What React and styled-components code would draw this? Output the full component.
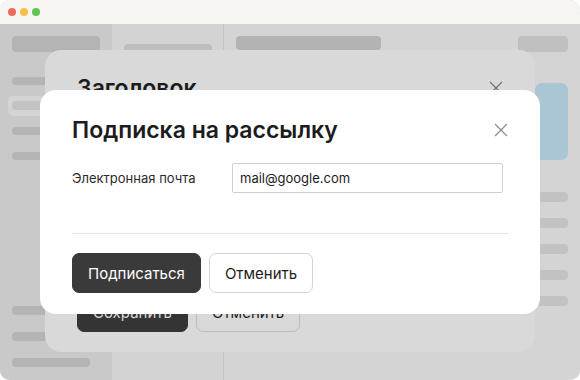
import React from 'react';
import styled, { createGlobalStyle } from 'styled-components';

const GlobalStyle = createGlobalStyle`
  html, body {
    margin: 0;
    padding: 0;
    background: #ffffff;
  }
  body {
    font-family: Inter, "Noto Sans", "Liberation Sans", sans-serif;
    -webkit-font-smoothing: antialiased;
  }
  * {
    box-sizing: border-box;
  }
`;

const Window = styled.div`
  width: 580px;
  height: 380px;
  border-radius: 10px;
  overflow: hidden;
  display: flex;
  flex-direction: column;
  background: #d4d4d4;
`;

const TitleBar = styled.div`
  height: 24px;
  flex-shrink: 0;
  display: flex;
  align-items: center;
  gap: 4px;
  padding-left: 8px;
  background: #f7f5f1;
`;

const Light = styled.span`
  width: 8px;
  height: 8px;
  border-radius: 50%;
  background: ${p => p.color};
`;

const Body = styled.div`
  position: relative;
  flex: 1;
  display: grid;
  grid-template-columns: 112px 111px 1px 1fr;
`;

const Sidebar = styled.div`
  display: flex;
  flex-direction: column;
  padding: 12px 12px 13px 12px;
  background: #c9c9c9;
`;

const Bar = styled.div`
  width: ${p => p.w}px;
  height: ${p => p.h || 8}px;
  border-radius: 4px;
  background: ${p => p.bg || '#b4b4b4'};
  flex-shrink: 0;
`;

const NavList = styled.div`
  display: flex;
  flex-direction: column;
  gap: 17px;
  margin-top: 25px;
`;

const NavSelected = styled.div`
  margin: -6px -4px -6px -4px;
  padding: 5px 4px 6px 4px;
  border-radius: 5px;
  background: #d4d4d4;
`;

const NavBottom = styled.div`
  margin-top: auto;
  display: flex;
  flex-direction: column;
  gap: 17px;
`;

const ListColumn = styled.div`
  padding: 20px 11px 0 12px;
  background: #d3d3d3;
`;

const Divider = styled.div`
  background: #c4c4c4;
`;

const Main = styled.div`
  display: flex;
  flex-direction: column;
  padding: 12px 12px 0 12px;
  background: #d4d4d4;
`;

const TopRow = styled.div`
  display: flex;
  justify-content: space-between;
  align-items: flex-start;
`;

const Aside = styled.div`
  display: flex;
  flex-direction: column;
  align-items: flex-end;
  margin-top: 31px;
`;

const BlueCard = styled.div`
  width: 33px;
  height: 77px;
  border-radius: 7px;
  background: #aac6d5;
`;

const AsideBars = styled.div`
  display: flex;
  flex-direction: column;
  gap: 16px;
  margin-top: 32px;
`;

const Overlay = styled.div`
  position: absolute;
  inset: 0;
`;

const Dialog = styled.div`
  position: absolute;
  left: ${p => p.x}px;
  top: ${p => p.y}px;
  width: ${p => p.w}px;
  height: ${p => p.h}px;
  display: flex;
  flex-direction: column;
  padding: ${p => p.pt}px 32px 20px 32px;
  border-radius: 16px;
  background: ${p => (p.back ? '#d9d9d9' : '#ffffff')};
`;

const Header = styled.div`
  display: flex;
  justify-content: space-between;
  align-items: center;
  height: 28px;
`;

const Title = styled.h2`
  margin: 0;
  font-size: 23px;
  line-height: 28px;
  font-weight: 600;
  color: #1c1c1c;
`;

const CloseButton = styled.button`
  display: flex;
  align-items: center;
  justify-content: center;
  width: 14px;
  height: 14px;
  padding: 0;
  border: none;
  background: none;
  color: ${p => (p.back ? '#6f6f6f' : '#8c8c8c')};
`;

const FormRow = styled.div`
  display: flex;
  align-items: center;
  margin-top: 19px;
`;

const Label = styled.label`
  width: 160px;
  font-size: 13px;
  color: #2b2b2b;
`;

const Input = styled.input`
  width: 271px;
  height: 30px;
  padding: 0 7px;
  border: 1px solid #cfcfcf;
  border-radius: 2px;
  font-family: inherit;
  font-size: 13px;
  color: #1c1c1c;
  outline: none;
`;

const Rule = styled.hr`
  margin: 40px 0 0 0;
  border: none;
  border-top: 1px solid #e4e4e4;
`;

const Spacer = styled.div`
  flex: 1;
`;

const Footer = styled.div`
  display: flex;
  gap: 8px;
  margin-top: ${p => p.mt || 0}px;
`;

const Button = styled.button`
  height: 40px;
  padding: 0 15px;
  border-radius: 7px;
  font-family: inherit;
  font-size: 15px;
  border: 1px solid ${p => (p.primary ? p.dark : p.line)};
  background: ${p => (p.primary ? p.dark : p.fill)};
  color: ${p => (p.primary ? p.ink : '#1c1c1c')};
`;

const CloseIcon = () => (
  <svg width="14" height="14" viewBox="0 0 14 14" fill="none">
    <path d="M1 1L13 13M13 1L1 13" stroke="currentColor" strokeWidth="1.2" />
  </svg>
);

const App = () => {
  return (
    <>
      <GlobalStyle />
      <Window>
        <TitleBar>
          <Light color="#ec6a5e" />
          <Light color="#f4bf4f" />
          <Light color="#61c554" />
        </TitleBar>
        <Body>
          <Sidebar>
            <Bar w={88} h={16} />
            <NavList>
              <Bar w={80} />
              <NavSelected>
                <Bar w={80} h={9} bg="#c3c3c3" />
              </NavSelected>
              <Bar w={80} />
              <Bar w={80} />
            </NavList>
            <NavBottom>
              <Bar w={80} h={9} />
              <Bar w={80} h={9} />
              <Bar w={78} h={9} />
            </NavBottom>
          </Sidebar>
          <ListColumn>
            <Bar w={88} h={12} bg="#bdbdbd" />
          </ListColumn>
          <Divider />
          <Main>
            <TopRow>
              <Bar w={145} h={14} bg="#b3b3b3" />
              <Bar w={50} h={16} bg="#c0c0c0" />
            </TopRow>
            <Aside>
              <BlueCard />
              <AsideBars>
                <Bar w={50} h={10} bg="#c2c2c2" />
                <Bar w={50} h={10} bg="#c2c2c2" />
                <Bar w={50} h={10} bg="#c2c2c2" />
                <Bar w={50} h={10} bg="#c2c2c2" />
                <Bar w={50} h={10} bg="#c2c2c2" />
              </AsideBars>
            </Aside>
          </Main>

          <Overlay>
            <Dialog back x={45} y={26} w={490} h={302} pt={24}>
              <Header>
                <Title>Заголовок</Title>
                <CloseButton back>
                  <CloseIcon />
                </CloseButton>
              </Header>
              <Spacer />
              <Footer>
                <Button primary dark="#343434" ink="#d9d9d9">Сохранить</Button>
                <Button fill="#d9d9d9" line="#bcbcbc">Отменить</Button>
              </Footer>
            </Dialog>

            <Dialog x={40} y={66} w={500} h={224} pt={26}>
              <Header>
                <Title>Подписка на рассылку</Title>
                <CloseButton>
                  <CloseIcon />
                </CloseButton>
              </Header>
              <FormRow>
                <Label>Электронная почта</Label>
                <Input defaultValue="mail@google.com" />
              </FormRow>
              <Rule />
              <Footer mt={19}>
                <Button primary dark="#3a3a3a" ink="#ffffff">Подписаться</Button>
                <Button fill="#ffffff" line="#d4d4d4">Отменить</Button>
              </Footer>
            </Dialog>
          </Overlay>
        </Body>
      </Window>
    </>
  );
};

export default App;
